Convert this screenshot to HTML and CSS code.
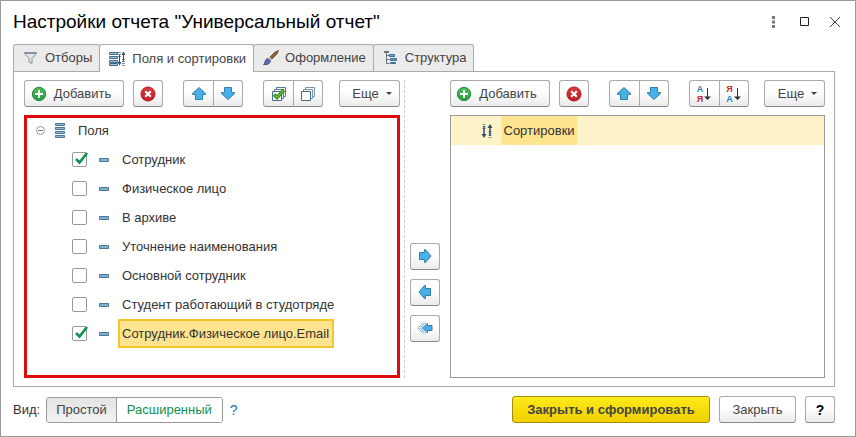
FILE: index.html
```html
<!DOCTYPE html>
<html lang="ru">
<head>
  <meta charset="UTF-8">
  <title>Настройки отчета</title>
  <link rel="stylesheet" href="styles.css">
</head>
<body>
  <svg class="sprite" aria-hidden="true">
    <defs>
      <linearGradient id="green" x1="0" y1="0" x2="0" y2="1">
        <stop offset="0" stop-color="#4cbb5c"/>
        <stop offset="1" stop-color="#28a03c"/>
      </linearGradient>
      <linearGradient id="red" x1="0" y1="0" x2="0" y2="1">
        <stop offset="0" stop-color="#dc3a3f"/>
        <stop offset="1" stop-color="#c41c24"/>
      </linearGradient>
    </defs>
    <symbol id="i-add" viewBox="0 0 16 16">
      <circle cx="8" cy="8" r="6.7" fill="url(#green)" stroke="#258a39"/>
      <path d="M8 4v8M4 8h8" stroke="#fff" stroke-width="2"/>
    </symbol>
    <symbol id="i-delete" viewBox="0 0 16 16">
      <circle cx="8" cy="8" r="7" fill="url(#red)" stroke="#ad1a21"/>
      <path d="M5.200 5.200l5.600 5.600M10.800 5.200l-5.600 5.600" stroke="#fff" stroke-width="2.200"/>
    </symbol>
    <symbol id="i-up" viewBox="0 0 16 16">
      <path d="M8 1.500L14.500 7.500V8.500H11.500V13.500H4.500V8.500H1.500V7.500Z" fill="#45b0ea" stroke="#3580ab"/>
    </symbol>
    <symbol id="i-down" viewBox="0 0 16 16">
      <path d="M8 13.500L14.500 7.500V6.500H11.500V1.500H4.500V6.500H1.500V7.500Z" fill="#45b0ea" stroke="#3580ab"/>
    </symbol>
    <symbol id="i-right" viewBox="0 0 16 16">
      <path d="M14 8L8.500 1.500H7.500V4.500H2.500V11.500H7.500V14.500H8.500Z" fill="#45b0ea" stroke="#3580ab"/>
    </symbol>
    <symbol id="i-left" viewBox="0 0 16 16">
      <path d="M2 8L7.500 1.500H8.500V4.500H13.500V11.500H8.500V14.500H7.500Z" fill="#45b0ea" stroke="#3580ab"/>
    </symbol>
    <symbol id="i-left-all" viewBox="0 0 16 16">
      <path d="M5.500 8L10 3.500H10.500V5.500H15V10.500H10.500V12.500H10Z" fill="#45b0ea" stroke="#3580ab"/>
      <path d="M6 2.500L.8 8L6 13.500M8.500 2.500L3.200 8L8.500 13.500" fill="none" stroke="#3580ab" stroke-dasharray="1.600 .8"/>
    </symbol>
    <symbol id="i-sort" viewBox="0 0 12 16">
      <path d="M3 1v6M9 8v7" stroke="#7d919c" stroke-width="3" stroke-dasharray="1 1"/>
      <path d="M3 3v10M9 3v10" stroke="#2f5068" stroke-width="1.500"/>
      <path d="M.5 11h5L3 15zM6.500 5h5L9 1z" fill="#2f5068"/>
    </symbol>
    <symbol id="i-field" viewBox="0 0 10 4">
      <path d="M.5.5h9v3h-9z" fill="#7fb0d2" stroke="#4d7898"/>
    </symbol>
    <symbol id="i-check" viewBox="0 0 17 17">
      <path d="M4 8L7.500 11.500L15 2" fill="none" stroke="#0e9151" stroke-width="2.600"/>
    </symbol>
  </svg>

  <div class="window">
    <header class="header">
      <h1>Настройки отчета "Универсальный отчет"</h1>
      <div class="window-buttons">
        <button type="button" aria-label="Меню">
          <svg width="16" height="16"><path d="M7 2h3v3H7zM7 6.500h3v3H7zM7 11h3v3H7z" fill="#777"/></svg>
        </button>
        <button type="button" aria-label="Развернуть">
          <svg width="16" height="16"><path d="M4.500 3.500h8v8h-8z" fill="none" stroke="#222"/></svg>
        </button>
        <button type="button" aria-label="Закрыть окно">
          <svg width="16" height="16"><path d="M3 3l10 10M13 3L3 13" stroke="#444"/></svg>
        </button>
      </div>
    </header>

    <nav class="tabs" role="tablist">
      <button type="button" class="tab" role="tab">
        <svg width="16" height="16">
          <path d="M1.500 2.500h12v1L9 8.500v5l-3-1.500V8.500L1.500 3.500z" fill="#e1e5e9" stroke="#8793a0"/>
          <path d="M2 3.500h11" stroke="#8793a0"/>
        </svg>
        Отборы
      </button>
      <button type="button" class="tab active" role="tab" aria-selected="true">
        <svg width="17" height="16">
          <path d="M.5 1.500h8v2h-8zM.5 5.500h8v2h-8zM.5 9.500h8v2h-8zM.5 12.500h8v2h-8z" fill="#a5c4da" stroke="#3f6b8c"/>
          <path d="M10.500 1v5M14.500 8v7" stroke="#7d919c" stroke-width="3" stroke-dasharray="1 1"/>
          <path d="M10.500 4v9M14.500 2v9" stroke="#2f5068"/>
          <path d="M8.500 11h4l-2 3.500zM12.500 4h4l-2-3.500z" fill="#2f5068"/>
        </svg>
        Поля и сортировки
      </button>
      <button type="button" class="tab" role="tab">
        <svg width="16" height="16">
          <path d="M15.500.5L14 4 8.500 9.500 6.500 7.500 12 2z" fill="#8b6234" stroke="#65451f" stroke-width=".8"/>
          <path d="M6.500 7l2.500 2.500-1.500 1.500L5 8.500z" fill="#c9cdd2"/>
          <path d="M5 8.500L7.500 11C7 14 4 15 .5 14.500 2.500 13 1.500 9 5 8.500z" fill="#5f6aa8" stroke="#373f78" stroke-width=".8"/>
        </svg>
        Оформление
      </button>
      <button type="button" class="tab" role="tab">
        <svg width="16" height="16">
          <path d="M3.500 1.500v12h3M3.500 5.500h3M3.500 9.500h3" fill="none" stroke="#66727d"/>
          <path d="M1 1h5v2H1z" fill="#66727d"/>
          <path d="M6.500 4.500h5v2h-5zM7.500 8.500h6v2h-6zM7.500 12.500h5v1h-5z" fill="#68a5d2" stroke="#416f91"/>
        </svg>
        Структура
      </button>
    </nav>

    <main class="panel">
      <section class="pane">
        <div class="toolbar">
          <button type="button" class="btn btn-add"><svg width="16" height="16"><use href="#i-add"/></svg>Добавить</button>
          <button type="button" class="btn btn-icon" aria-label="Удалить"><svg width="16" height="16"><use href="#i-delete"/></svg></button>
          <div class="btn-group">
            <button type="button" class="btn btn-icon" aria-label="Вверх"><svg width="16" height="16"><use href="#i-up"/></svg></button>
            <button type="button" class="btn btn-icon" aria-label="Вниз"><svg width="16" height="16"><use href="#i-down"/></svg></button>
          </div>
          <div class="btn-group">
            <button type="button" class="btn btn-icon" aria-label="Установить флажки">
              <svg width="16" height="16">
                <path d="M5.500 3.500v-2h9v9h-2M3.500 5.500v-2h9v9h-2" fill="none" stroke="#557a96"/>
                <path d="M1.500 5.500h9v9h-9z" fill="#fff" stroke="#446b88"/>
                <path d="M3 8.500l3 3L13 4" fill="none" stroke="#2c8a12" stroke-width="3.400"/>
                <path d="M3.500 9l2.500 2.500L12.500 4.500" fill="none" stroke="#62c43a" stroke-width="1.400"/>
              </svg>
            </button>
            <button type="button" class="btn btn-icon" aria-label="Снять флажки">
              <svg width="16" height="16">
                <path d="M5.500 3.500v-2h9v9h-2M3.500 5.500v-2h9v9h-2" fill="none" stroke="#7893a8"/>
                <path d="M1.500 5.500h9v9h-9z" fill="#fff" stroke="#446b88"/>
              </svg>
            </button>
          </div>
          <button type="button" class="btn btn-more">Еще<span class="caret"></span></button>
        </div>

        <div class="list list-marked">
          <div class="root">
            <button type="button" class="toggle" aria-label="Свернуть">
              <svg width="9" height="9"><circle cx="4.500" cy="4.500" r="4" fill="#fff" stroke="#999"/><path d="M2 4.500h5" stroke="#777"/></svg>
            </button>
            <svg width="10" height="15"><path d="M.5.5h9v2h-9zM.5 4.500h9v2h-9zM.5 8.500h9v2h-9zM.5 12.500h9v2h-9z" fill="#8fb6d2" stroke="#4d7898"/></svg>
            <span>Поля</span>
          </div>
          <ul class="fields">
            <li>
              <span class="check"><input type="checkbox" id="f1" checked><svg width="17" height="17"><use href="#i-check"/></svg></span>
              <svg width="10" height="4"><use href="#i-field"/></svg>
              <label for="f1">Сотрудник</label>
            </li>
            <li>
              <span class="check"><input type="checkbox" id="f2"><svg width="17" height="17"><use href="#i-check"/></svg></span>
              <svg width="10" height="4"><use href="#i-field"/></svg>
              <label for="f2">Физическое лицо</label>
            </li>
            <li>
              <span class="check"><input type="checkbox" id="f3"><svg width="17" height="17"><use href="#i-check"/></svg></span>
              <svg width="10" height="4"><use href="#i-field"/></svg>
              <label for="f3">В архиве</label>
            </li>
            <li>
              <span class="check"><input type="checkbox" id="f4"><svg width="17" height="17"><use href="#i-check"/></svg></span>
              <svg width="10" height="4"><use href="#i-field"/></svg>
              <label for="f4">Уточнение наименования</label>
            </li>
            <li>
              <span class="check"><input type="checkbox" id="f5"><svg width="17" height="17"><use href="#i-check"/></svg></span>
              <svg width="10" height="4"><use href="#i-field"/></svg>
              <label for="f5">Основной сотрудник</label>
            </li>
            <li>
              <span class="check"><input type="checkbox" id="f6"><svg width="17" height="17"><use href="#i-check"/></svg></span>
              <svg width="10" height="4"><use href="#i-field"/></svg>
              <label for="f6">Студент работающий в студотряде</label>
            </li>
            <li class="selected">
              <span class="check"><input type="checkbox" id="f7" checked><svg width="17" height="17"><use href="#i-check"/></svg></span>
              <svg width="10" height="4"><use href="#i-field"/></svg>
              <label for="f7">Сотрудник.Физическое лицо.Email</label>
            </li>
          </ul>
        </div>
      </section>

      <div class="transfer">
        <button type="button" class="btn btn-icon" aria-label="Добавить в сортировку"><svg width="16" height="16"><use href="#i-right"/></svg></button>
        <button type="button" class="btn btn-icon" aria-label="Убрать из сортировки"><svg width="16" height="16"><use href="#i-left"/></svg></button>
        <button type="button" class="btn btn-icon" aria-label="Убрать все"><svg width="16" height="16"><use href="#i-left-all"/></svg></button>
      </div>

      <section class="pane">
        <div class="toolbar">
          <button type="button" class="btn btn-add"><svg width="16" height="16"><use href="#i-add"/></svg>Добавить</button>
          <button type="button" class="btn btn-icon" aria-label="Удалить"><svg width="16" height="16"><use href="#i-delete"/></svg></button>
          <div class="btn-group">
            <button type="button" class="btn btn-icon" aria-label="Вверх"><svg width="16" height="16"><use href="#i-up"/></svg></button>
            <button type="button" class="btn btn-icon" aria-label="Вниз"><svg width="16" height="16"><use href="#i-down"/></svg></button>
          </div>
          <div class="btn-group">
            <button type="button" class="btn btn-icon btn-sort" aria-label="По возрастанию">
              <span class="letters"><span class="blue">А</span><span class="red">Я</span></span>
              <svg width="7" height="14"><path d="M3.500 1v10" stroke="#333"/><path d="M0 9.500h7L3.500 13z" fill="#333"/></svg>
            </button>
            <button type="button" class="btn btn-icon btn-sort" aria-label="По убыванию">
              <span class="letters"><span class="red">Я</span><span class="blue">А</span></span>
              <svg width="7" height="14"><path d="M3.500 1v10" stroke="#333"/><path d="M0 9.500h7L3.500 13z" fill="#333"/></svg>
            </button>
          </div>
          <button type="button" class="btn btn-more">Еще<span class="caret"></span></button>
        </div>

        <div class="list">
          <div class="sort-row">
            <svg width="12" height="16"><use href="#i-sort"/></svg>
            <span>Сортировки</span>
          </div>
        </div>
      </section>
    </main>

    <footer class="footer">
      <span>Вид:</span>
      <div class="view-switch">
        <button type="button">Простой</button>
        <button type="button" class="on">Расширенный</button>
      </div>
      <a href="#" class="hint">?</a>
      <div class="actions">
        <button type="button" class="btn btn-primary">Закрыть и сформировать</button>
        <button type="button" class="btn btn-close">Закрыть</button>
        <button type="button" class="btn btn-icon btn-help">?</button>
      </div>
    </footer>
  </div>
</body>
</html>
```

FILE: styles.css
```css
* {
  box-sizing: border-box;
}

body {
  margin: 0;
  font-family: "Liberation Sans", Arial, sans-serif;
  font-size: 13px;
  line-height: 16px;
  color: #333;
  background: #fff;
}

button {
  font: inherit;
  color: #444;
  padding: 0;
  cursor: pointer;
}

svg {
  display: block;
  flex: none;
}

.sprite {
  position: absolute;
  width: 0;
  height: 0;
}

.window {
  display: flex;
  flex-direction: column;
  min-height: 100vh;
  border: 1px solid #999;
  padding: 0 20px 13px 12px;
}

/* header */
.header {
  display: flex;
  align-items: center;
  justify-content: space-between;
  height: 43px;
  padding-bottom: 2px;
}

h1 {
  margin: 0;
  font-size: 19px;
  line-height: 22px;
  font-weight: normal;
  color: #000;
}

.window-buttons {
  display: flex;
  gap: 15px;
  margin-right: -8px;
}

.window-buttons button {
  border: none;
  background: none;
}

/* tabs */
.tabs {
  display: flex;
}

.tab {
  display: flex;
  align-items: center;
  gap: 6px;
  height: 27px;
  padding: 0 7px 0 9px;
  border: 1px solid #aaa;
  border-bottom: none;
  border-radius: 3px 3px 0 0;
  background: #ebebeb;
}

.tab + .tab {
  margin-left: -1px;
}

.tab.active {
  height: 28px;
  margin-bottom: -1px;
  background: #fff;
  position: relative;
}

/* panel */
.panel {
  flex: 1;
  display: flex;
  border: 1px solid #aaa;
  padding: 8px 9px 8px 10px;
}

.pane {
  flex: 1;
  display: flex;
  flex-direction: column;
  gap: 8px;
}

.toolbar {
  display: flex;
}

.btn {
  display: flex;
  align-items: center;
  justify-content: center;
  height: 27px;
  border: 1px solid #aaa;
  border-bottom-color: #888;
  border-radius: 3px;
  background: linear-gradient(#fff 40%, #ebebeb);
}

.btn-icon {
  width: 30px;
}

.btn-add {
  gap: 7px;
  width: 100px;
  margin-right: 9px;
  padding-right: 6px;
}

.btn-group {
  display: flex;
  margin-left: 20px;
}

.btn-group .btn:first-child {
  width: 31px;
  border-radius: 3px 0 0 3px;
}

.btn-group .btn + .btn {
  margin-left: -1px;
  border-radius: 0 3px 3px 0;
}

.btn-sort {
  gap: 1px;
}

.btn-more {
  gap: 7px;
  width: 61px;
  margin-left: auto;
  padding-left: 6px;
}

.caret {
  border: 3px solid transparent;
  border-top-color: #444;
  border-bottom: none;
}

.letters {
  display: flex;
  flex-direction: column;
  font-size: 9px;
  line-height: 10px;
  font-weight: bold;
}

.blue {
  color: #2a7fc4;
}

.red {
  color: #c42a30;
}

.list {
  flex: 1;
  border: 1px solid #999;
  background: #fff;
}

.list-marked {
  border: 3px solid #e00b0b;
}

.root {
  display: flex;
  align-items: center;
  height: 27px;
  padding: 0 0 2px 9px;
}

.toggle {
  margin-right: 10px;
  border: none;
  background: none;
}

.root span {
  margin-left: 13px;
}

.fields {
  list-style: none;
  margin: 0;
  padding: 0 0 0 45px;
}

.fields li {
  display: flex;
  align-items: center;
  height: 29px;
}

.check {
  display: grid;
  margin-right: 10px;
}

.check input,
.check svg {
  grid-area: 1 / 1;
}

.check input {
  appearance: none;
  width: 15px;
  height: 15px;
  margin: 1px;
  margin-left: 0;
  border: 1px solid #999;
  border-radius: 2px;
  background: #fff;
}

.check svg {
  visibility: hidden;
  pointer-events: none;
}

.check input:checked + svg {
  visibility: visible;
}

.fields label {
  margin-left: 9px;
  padding: 5px 3px 4px 2px;
  border: 2px solid transparent;
}

.selected label {
  border-color: #f5c629;
  background: #ffe48f;
}

.transfer {
  display: flex;
  flex-direction: column;
  justify-content: center;
  gap: 9px;
  width: 46px;
  margin-left: 4px;
  padding: 126px 10px 0 5px;
  border-left: 1px dashed #ccc;
}

.sort-row {
  display: flex;
  align-items: center;
  gap: 9px;
  height: 29px;
  padding-left: 30px;
  background: #fdf2c8;
}

.sort-row span {
  padding: 7px 2px 6px;
  background: #ffe48f;
}

/* footer */
.footer {
  display: flex;
  align-items: center;
  padding-top: 9px;
}

.view-switch {
  display: flex;
  margin: 0 7px 0 6px;
  border: 1px solid #999;
  border-radius: 3px;
  overflow: hidden;
}

.view-switch button {
  height: 24px;
  padding: 0 9px;
  border: none;
  background: linear-gradient(#e4e4e4, #f2f2f2);
}

.view-switch .on {
  padding: 0 10px;
  border-left: 1px solid #999;
  background: #fff;
  color: #0e9151;
}

.hint {
  color: #1a76bd;
  text-decoration: none;
  font-size: 14px;
}

.actions {
  display: flex;
  gap: 9px;
  margin-left: auto;
}

.btn-primary {
  width: 198px;
  border-color: #a08e10;
  background: linear-gradient(#ffea1a, #f0d000);
  font-weight: bold;
}

.btn-close {
  width: 77px;
}

.btn-help {
  color: #000;
  font-size: 14px;
  font-weight: bold;
}
```
